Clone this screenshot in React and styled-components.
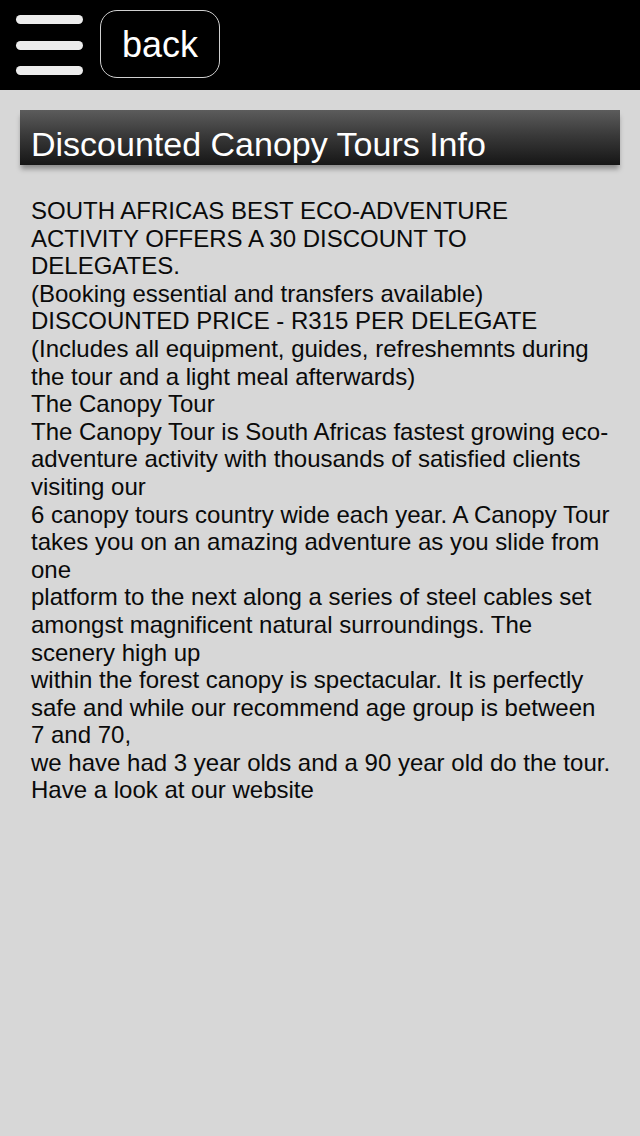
import React from "react";
import styled, { createGlobalStyle } from "styled-components";

const Global = createGlobalStyle`
  html, body { margin: 0; padding: 0; }
  body {
    background: #d6d6d6;
    font-family: "Liberation Sans", Arial, Helvetica, sans-serif;
    -webkit-font-smoothing: antialiased;
  }
`;

const Page = styled.div`
  min-height: 1136px;
  background: #d7d7d7;
  display: flex;
  flex-direction: column;
`;

const Header = styled.header`
  height: 90px;
  background: #000;
  display: flex;
  align-items: center;
  padding: 0 16px;
  gap: 17px;
  box-sizing: border-box;
`;

const Burger = styled.button`
  width: 67px;
  height: 60px;
  padding: 0;
  border: 0;
  background: transparent;
  display: flex;
  flex-direction: column;
  justify-content: space-between;
`;

const Bar = styled.span`
  display: block;
  height: 9px;
  border-radius: 5px;
  background: #ececec;
`;

const BackButton = styled.button`
  width: 120px;
  height: 68px;
  box-sizing: border-box;
  border: 1.5px solid #d0d0d0;
  border-radius: 17px;
  background: #000;
  color: #fff;
  font-family: "Liberation Sans", Arial, sans-serif;
  font-size: 36px;
  padding: 2px 0 0;
  margin-top: -2px;
`;

const TitleBar = styled.h1`
  margin: 20px 20px 0;
  height: 55px;
  box-sizing: border-box;
  padding: 13px 11px 0;
  display: flex;
  align-items: center;
  background: linear-gradient(#5c5c5c, #3a3a3a 45%, #161616);
  box-shadow: 0 5px 5px -1px rgba(0, 0, 0, 0.35);
  color: #fff;
  font-weight: normal;
  font-size: 34px;
  line-height: 1;
`;

const Body = styled.div`
  padding: 32px 27px 0 31px;
  color: #0a0a0a;
  font-size: 24px;
  line-height: 27.6px;
`;

const lines = [
  "SOUTH AFRICAS BEST ECO-ADVENTURE ACTIVITY OFFERS A 30 DISCOUNT TO DELEGATES.",
  "(Booking essential and transfers available)",
  "DISCOUNTED PRICE - R315 PER DELEGATE",
  "(Includes all equipment, guides, refreshemnts during the tour and a light meal afterwards)",
  "The Canopy Tour",
  "The Canopy Tour is South Africas fastest growing eco-adventure activity with thousands of satisfied clients visiting our",
  "6 canopy tours country wide each year. A Canopy Tour takes you on an amazing adventure as you slide from one",
  "platform to the next along a series of steel cables set amongst magnificent natural surroundings. The scenery high up",
  "within the forest canopy is spectacular. It is perfectly safe and while our recommend age group is between 7 and 70,",
  "we have had 3 year olds and a 90 year old do the tour.",
  "Have a look at our website",
];

export default function App() {
  return (
    <Page>
      <Global />
      <Header>
        <Burger aria-label="menu">
          <Bar />
          <Bar />
          <Bar />
        </Burger>
        <BackButton>back</BackButton>
      </Header>
      <TitleBar>Discounted Canopy Tours Info</TitleBar>
      <Body>
        {lines.map((l, i) => (
          <React.Fragment key={i}>
            {l}
            {i < lines.length - 1 && <br />}
          </React.Fragment>
        ))}
      </Body>
    </Page>
  );
}
